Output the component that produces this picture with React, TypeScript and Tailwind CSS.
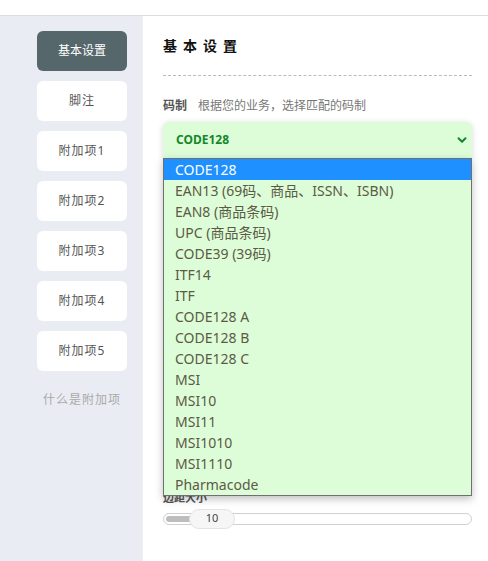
import { ChevronDown } from 'lucide-react'

const navItems = ['基本设置', '脚注', '附加项1', '附加项2', '附加项3', '附加项4', '附加项5']

const codeTypes = [
  'CODE128',
  'EAN13 (69码、商品、ISSN、ISBN)',
  'EAN8 (商品条码)',
  'UPC (商品条码)',
  'CODE39 (39码)',
  'ITF14',
  'ITF',
  'CODE128 A',
  'CODE128 B',
  'CODE128 C',
  'MSI',
  'MSI10',
  'MSI11',
  'MSI1010',
  'MSI1110',
  'Pharmacode',
]

export default function App() {
  return (
    <div
      className="flex h-[561px] w-[488px] flex-col overflow-hidden bg-white"
      style={{ fontFamily: '"Noto Sans", "Noto Sans CJK SC", sans-serif' }}
    >
      {/* Top bar */}
      <div className="h-[16px] shrink-0 border-b border-[#dcdcdc] bg-white" />

      <div className="flex flex-1">
        {/* Sidebar */}
        <aside className="flex w-[142px] shrink-0 justify-end bg-[#e9ecf3] pr-[15px] pt-[15px]">
          <div className="flex w-[90px] flex-col items-center gap-[10px]">
            {navItems.map((item, i) => (
              <button
                key={item}
                className={
                  i === 0
                    ? 'flex h-[40px] w-[90px] items-center justify-center rounded-md bg-[#56676c] text-[12px] text-white'
                    : 'flex h-[40px] w-[90px] items-center justify-center rounded-md bg-white text-[12px] tracking-[1px] text-[#555]'
                }
              >
                {item}
              </button>
            ))}
            <p className="mt-[10px] whitespace-nowrap text-[12px] tracking-[1px] text-[#aaa]">什么是附加项</p>
          </div>
        </aside>

        {/* Main */}
        <main className="flex-1 border-l border-[#eef0f4] pl-[20px] pr-[16px] pt-[19px]">
          <h2 className="text-[14px] font-bold tracking-[6px] text-[#111]">基本设置</h2>
          <div className="mt-[19px] border-t border-dashed border-[#bbb]" />

          <div className="mt-[21px] flex items-center gap-[11px] text-[12px]">
            <span className="font-bold text-[#555]">码制</span>
            <span className="text-[#777]">根据您的业务，选择匹配的码制</span>
          </div>

          {/* Select */}
          <div className="relative mt-[7px]">
            <div className="flex h-[36px] items-center justify-between rounded-t-md bg-[#ddfdd9] pl-[13px] pr-[3px] shadow-[0_1px_6px_rgba(0,0,0,0.15)]">
              <span className="text-[12px] font-bold text-[#17862b]">CODE128</span>
              <ChevronDown size={14} strokeWidth={3.5} className="text-[#17862b]" />
            </div>

            <ul className="absolute left-0 right-0 top-[36px] z-10 border border-[#707070] bg-[#ddfdd9] shadow-[0_3px_8px_rgba(0,0,0,0.25)]">
              {codeTypes.map((c, i) => (
                <li
                  key={c}
                  className={
                    i === 0
                      ? 'flex h-[21px] items-center bg-[#1e90ff] pl-[11px] text-[14px] text-white'
                      : 'flex h-[21px] items-center pl-[11px] text-[14px] text-[#5c5a45]'
                  }
                >
                  {c}
                </li>
              ))}
            </ul>
          </div>

          {/* Margin size */}
          <p className="mt-[332px] text-[11px] font-bold text-[#555]">边距大小</p>
          <div className="relative mt-[6px] flex h-[12px] items-center rounded-full border border-[#d0d0d0] bg-white">
            <div className="ml-[2px] h-[6px] w-[36px] rounded-l-full bg-[#bdbdbd]" />
            <div className="absolute left-[25px] top-1/2 flex h-[20px] w-[46px] -translate-y-1/2 items-center justify-center rounded-full border border-[#e3e3e3] bg-[#f6f6f6] text-[11px] text-[#444]">
              10
            </div>
          </div>
        </main>
      </div>
    </div>
  )
}
